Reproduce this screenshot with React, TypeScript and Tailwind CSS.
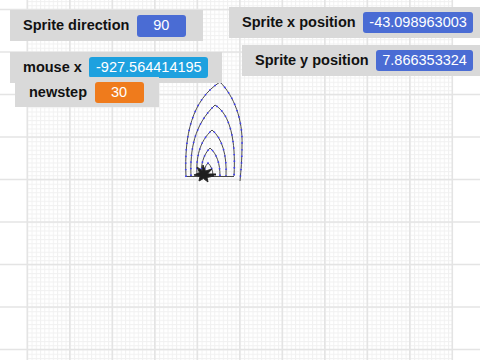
import type { ReactNode } from 'react'

// Stage major grid: 42.5px spacing, minor every 4.25px inside the stage area
const MAJOR_X = Array.from({ length: 11 }, (_, i) => 27.3 + i * 42.5)
const MAJOR_Y = Array.from({ length: 9 }, (_, i) => 9.5 + i * 42.5)

const ARCHES = [
  'M186,177 C184,135 192,100 220,82 C234,96 243,120 242,145 C242,160 241,170 240,181',
  'M191,176 C190,150 194,125 215,105 C230,114 236,140 234,176',
  'M197,176 C196,158 199,142 212,130 C222,138 227,155 226,176',
  'M201,176 C201,165 203,155 210,148 C217,154 220,164 220,176',
  'M204,176 C204,170 205,166 208,163 C211,166 213,170 213,176',
]

function StageGrid() {
  return (
    <svg className="absolute inset-0" width={480} height={360} viewBox="0 0 480 360">
      <defs>
        <pattern id="minor" width={4.25} height={4.25} x={27.3} y={9.5} patternUnits="userSpaceOnUse">
          <path d="M0,0.5 H4.25 M0.5,0 V4.25" stroke="#f1f1f1" strokeWidth={1} fill="none" />
        </pattern>
      </defs>
      <rect x={27.3} y={0} width={425} height={360} fill="url(#minor)" />
      {MAJOR_Y.map((y) => (
        <line key={'h' + y} x1={0} x2={480} y1={y} y2={y} stroke="#e4e4e4" strokeWidth={1.6} />
      ))}
      {MAJOR_X.map((x) => (
        <line key={'v' + x} x1={x} x2={x} y1={0} y2={360} stroke="#e4e4e4" strokeWidth={1.6} />
      ))}
    </svg>
  )
}

function PenDrawing() {
  return (
    <svg className="absolute inset-0" width={480} height={360} viewBox="0 0 480 360">
      {ARCHES.map((d) => (
        <path key={d} d={d} fill="none" stroke="#4a4a4a" strokeWidth={1} />
      ))}
      <path d="M186,176.5 H234" stroke="#4a4a4a" strokeWidth={1.2} />
      {ARCHES.map((d) => (
        <path
          key={'dot' + d}
          d={d}
          fill="none"
          stroke="#3a3aff"
          strokeWidth={1.6}
          strokeDasharray="1.4 5.2"
        />
      ))}
      {/* sprite stamp */}
      <path
        d="M203,165 L205.5,171 L212,169 L207.5,174 L214,176 L207,177.5 L208,182 L203.5,178.5 L199,181 L200,176.5 L194,175 L199.5,172.5 L197,167 L202,170.5 Z"
        fill="#1f1f1f"
        stroke="#2a2a2a"
        strokeWidth={1}
        strokeLinejoin="round"
      />
      <path d="M204,174.5 H216" stroke="#1f1f1f" strokeWidth={2} />
    </svg>
  )
}

function Monitor({
  className,
  label,
  valueClass,
  children,
}: {
  className: string
  label: string
  valueClass: string
  children: ReactNode
}) {
  return (
    <div className={`absolute flex items-center bg-[#d9d9d9] pl-[13px] ${className}`}>
      <span className="text-[14.5px] font-bold text-[#111] whitespace-nowrap leading-none">
        {label}
      </span>
      <span
        className={`ml-[7.5px] flex items-center justify-center rounded-[3px] text-[14.5px] text-white leading-none whitespace-nowrap ${valueClass}`}
      >
        {children}
      </span>
    </div>
  )
}

export default function App() {
  return (
    <div className="relative w-[480px] h-[360px] overflow-hidden bg-white font-['Liberation_Sans',Arial,sans-serif]">
      <StageGrid />
      <PenDrawing />

      {/* Variable monitors */}
      <Monitor
        className="left-[10px] top-[10px] w-[193px] h-[31px]"
        label="Sprite direction"
        valueClass="w-[49px] h-[22px] bg-[#4a6cd4]"
      >
        90
      </Monitor>
      <Monitor
        className="left-[229px] top-[7px] w-[251px] h-[31px]"
        label="Sprite x position"
        valueClass="w-[110px] h-[21px] bg-[#4a6cd4]"
      >
        -43.098963003
      </Monitor>
      <Monitor
        className="left-[242px] top-[45px] w-[238px] h-[31px]"
        label="Sprite y position"
        valueClass="w-[97px] h-[21px] bg-[#4a6cd4]"
      >
        7.866353324
      </Monitor>
      <Monitor
        className="left-[10px] top-[52px] w-[212px] h-[31px]"
        label="mouse x"
        valueClass="w-[119px] h-[21px] bg-[#1ea1df]"
      >
        -927.564414195
      </Monitor>
      <Monitor
        className="left-[15px] top-[77px] w-[144px] h-[30px] pl-[14px]"
        label="newstep"
        valueClass="w-[49px] h-[21px] bg-[#ef7b1c]"
      >
        30
      </Monitor>
    </div>
  )
}
